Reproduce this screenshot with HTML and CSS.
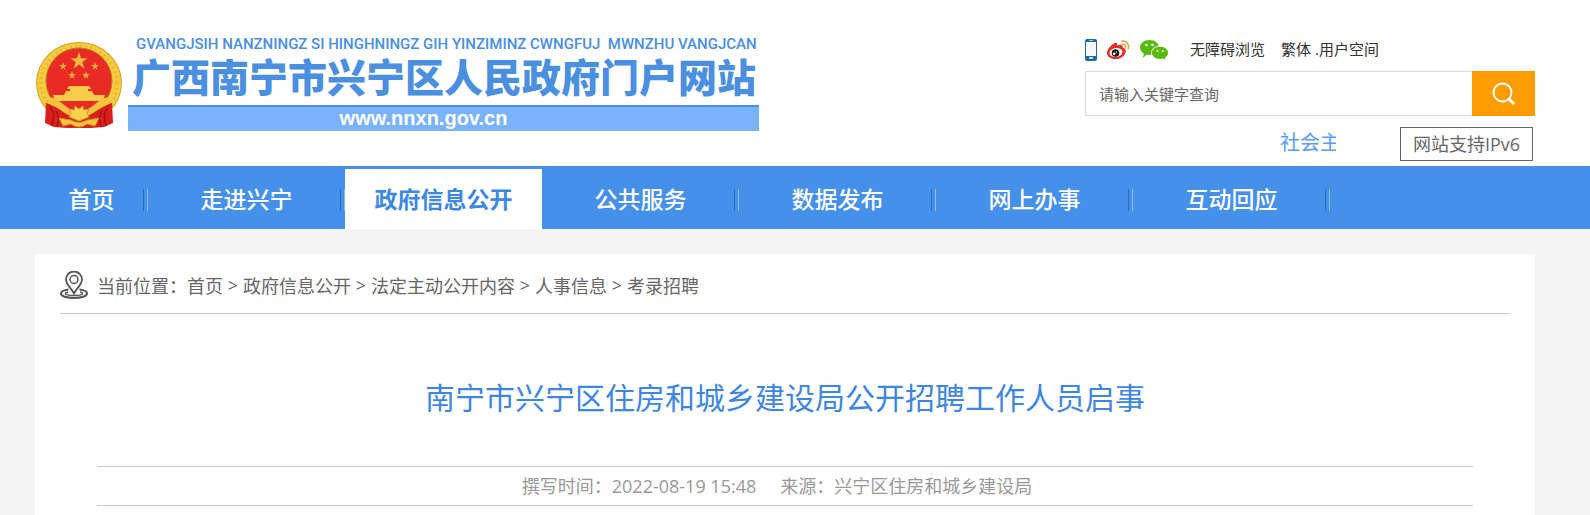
FILE: index.html
```html
<!DOCTYPE html>
<html lang="zh-CN">
<head>
    <meta charset="UTF-8">
    <meta name="viewport" content="width=device-width, initial-scale=1.0">
    <title>南宁市兴宁区住房和城乡建设局公开招聘工作人员启事</title>
    <link rel="stylesheet" href="styles.css">
</head>
<body>

    <!-- 页头 -->
    <header class="header">
        <div class="logo">
            <svg class="emblem" viewBox="0 0 88 88" aria-hidden="true">
                <ellipse cx="44" cy="42" rx="43" ry="41" fill="#d9a01c"/>
                <ellipse cx="44" cy="42" rx="42" ry="40" fill="#f6cc42"/>
                <ellipse cx="44" cy="42" rx="38" ry="36" fill="none" stroke="#ebb930" stroke-width="4" stroke-dasharray="2 3"/>
                <circle cx="44" cy="40" r="33" fill="#ea2a25" stroke="#b87a1c" stroke-width="1"/>
                <path d="M44 11l2 6.200h6.500l-5.200 3.900 2 6.300-5.300-3.900-5.300 3.900 2-6.300-5.200-3.900h6.500z" fill="#f0bd42"/>
                <path id="star" d="M28 21l1 3h3l-2.500 2 1 3-2.500-2-2.500 2 1-3-2.500-2h3z" fill="#e9a83c"/>
                <use href="#star" x="32"/>
                <use href="#star" x="9" y="9"/>
                <use href="#star" x="23" y="9"/>
                <path d="M34 45h20l2 3H32zM35 48h18v3H35zM31 50h26l2 4H29zM32 54h24v3H32z" fill="#f8cc48"/>
                <path d="M18 54h52l-2 6H20z" fill="#f8cc48"/>
                <path d="M11 62c8 2 15 8 22 10h22c8-2 14-8 22-10l1 20-9 4-13 1H32l-13-1-9-4z" fill="#d9201c"/>
                <path d="M15 66l4 7-2 12M21 70l3 7-2 9M73 66l-4 7 2 12M67 70l-3 7 2 9" fill="none" stroke="#a81212" stroke-width="1.500"/>
                <path d="M15 59c9 2 14 12 24 14M73 59c-9 2-14 12-24 14" fill="none" stroke="#f3c13b" stroke-width="6"/>
                <path d="M36 72l-2-4 5 1 1-4 4 3 4-3 1 4 5-1-2 4 2 4-5 2-5 2-5-2-5-2z" fill="#f8d04c" stroke="#cf9420" stroke-width="1"/>
                <path d="M24 77l12 2c5 3 11 3 16 0l12-2-4 8-8-2c-5 4-11 4-16 0l-8 2z" fill="#f4c43f" stroke="#c98a1c" stroke-width="1"/>
            </svg>
            <div class="logo-text">
                <div class="logo-pinyin">GVANGJSIH NANZNINGZ SI HINGHNINGZ GIH YINZIMINZ CWNGFUJ &nbsp;MWNZHU VANGJCAN</div>
                <div class="logo-name">广西南宁市兴宁区人民政府门户网站</div>
                <div class="logo-url">www.nnxn.gov.cn</div>
            </div>
        </div>

        <div class="tools">
            <div class="tool-links">
                <a href="#" class="icon" aria-label="手机版">
                    <svg width="12" height="22" viewBox="0 0 12 22">
                        <rect width="12" height="22" rx="2" fill="#2168a8"/>
                        <rect x="1" y="3" width="10" height="14" fill="#f6fafd"/>
                        <path d="M4 1.500h4" stroke="#9cc2e0"/>
                        <rect x="4" y="18" width="4" height="2" rx="1" fill="#d5e6f3"/>
                    </svg>
                </a>
                <a href="#" class="icon" aria-label="微博">
                    <svg width="23" height="20" viewBox="0 0 23 20">
                        <path d="M8 3c2-.8 2.500.8 2 2.500 3-1.500 6.500-1 5.500 2 3 .8 4 2.500 3 5.200-1.500 4-5.500 6.300-10 6.300-5 0-8.500-2.500-8.500-6C0 9 5 4 8 3z" fill="#e0302b"/>
                        <ellipse cx="9" cy="12.500" rx="6.500" ry="4.500" fill="#fff" transform="rotate(-8 9 12.500)"/>
                        <circle cx="8.500" cy="13" r="3.800" fill="#201514"/>
                        <circle cx="7.200" cy="13.800" r="1.300" fill="#fff"/>
                        <circle cx="9.500" cy="12" r=".7" fill="#fff"/>
                        <path d="M14.500 1.200c4.500-.9 8 2.600 6.800 7.200M15 4.200c2.600-.4 4 1.200 3.400 3.600" fill="none" stroke="#f0a045" stroke-width="1.500" stroke-linecap="round"/>
                    </svg>
                </a>
                <a href="#" class="icon icon-wechat" aria-label="微信">
                    <svg width="29" height="21" viewBox="0 0 29 21">
                        <path d="M9.500 0C15 0 19 3.300 19 7.500S15 15 9.500 15c-1 0-2-.1-3-.4L3 18l.8-4.500C1.500 12 0 10 0 7.500 0 3.300 4 0 9.500 0z" fill="#57bb0c"/>
                        <path d="M20 6.200c4.700 0 8.500 2.900 8.500 6.600 0 2-1.200 3.800-3 5l.6 2.700-3-1.500c-1 .3-2 .4-3.100.4-4.700 0-8.500-2.900-8.500-6.600s3.800-6.600 8.500-6.600z" fill="#57bb0c" stroke="#fff"/>
                        <circle cx="6.500" cy="5" r="1.300" fill="#fff"/>
                        <circle cx="12.500" cy="5" r="1.300" fill="#fff"/>
                        <circle cx="17.500" cy="11" r="1.100" fill="#fff"/>
                        <circle cx="22.800" cy="11" r="1.100" fill="#fff"/>
                    </svg>
                </a>
                <a href="#" class="link-access">无障碍浏览</a>
                <span class="link-user"><a href="#">繁体</a> .<a href="#">用户空间</a></span>
            </div>
            <form class="search">
                <input type="text" placeholder="请输入关键字查询" aria-label="关键字">
                <button type="button" aria-label="搜索">
                    <svg width="24" height="24" viewBox="0 0 24 24" fill="none" stroke="#fff" stroke-width="2">
                        <circle cx="10.500" cy="10.500" r="9"/>
                        <path d="M16.500 16.500l5.500 5.500" stroke-width="3"/>
                    </svg>
                </button>
            </form>
            <div class="notice">
                <div class="scroll-text">社会主</div>
                <a href="#" class="ipv6">网站支持IPv6</a>
            </div>
        </div>
    </header>

    <!-- 导航栏 -->
    <nav class="nav">
        <div class="nav-inner">
            <a href="#" class="nav-home">首页</a>
            <a href="#">走进兴宁</a>
            <a href="#" class="active">政府信息公开</a>
            <a href="#">公共服务</a>
            <a href="#">数据发布</a>
            <a href="#">网上办事</a>
            <a href="#">互动回应</a>
        </div>
    </nav>

    <!-- 正文 -->
    <main class="content">
        <div class="breadcrumb">
            <svg width="28" height="28" viewBox="0 0 28 28" fill="none" stroke="#555">
                <path d="M8.500 18.500C4 19 1 20.500 1 22.500 1 25.300 7 27 14 27s13-1.700 13-4.500c0-2-3-3.500-7.500-4" stroke-width="2"/>
                <path d="M8 21c-2 .4-2.500 1-2.500 1.500 0 1.200 4 2 8.500 2s8.500-.8 8.500-2c0-.5-.5-1.100-2.500-1.500" stroke-width="1.500"/>
                <path d="M14 22.500C11.500 17.500 6 13.500 6 8.500a8 8 0 0 1 16 0c0 5-5.500 9-8 14z" fill="#fff" stroke-width="1.800"/>
                <circle cx="14" cy="8.500" r="4" stroke-width="1.500"/>
            </svg>
            <span>当前位置：</span>
            <a href="#">首页</a>
            <i>&gt;</i>
            <a href="#">政府信息公开</a>
            <i>&gt;</i>
            <a href="#">法定主动公开内容</a>
            <i>&gt;</i>
            <a href="#">人事信息</a>
            <i>&gt;</i>
            <a href="#">考录招聘</a>
        </div>
        <h1 class="title">南宁市兴宁区住房和城乡建设局公开招聘工作人员启事</h1>
        <div class="meta">
            <span>撰写时间：2022-08-19 15:48</span>
            <span>来源：兴宁区住房和城乡建设局</span>
        </div>
    </main>

</body>
</html>
```
FILE: styles.css
```css
* {
    box-sizing: border-box;
}
body {
    margin: 0;
    background-color: #f4f4f4;
    font-family: "Open Sans", "Noto Sans CJK SC", sans-serif;
    color: #666;
}
a {
    color: inherit;
    text-decoration: none;
}
svg {
    display: block;
}

/* 页头 */
.header {
    display: flex;
    justify-content: space-between;
    align-items: flex-start;
    height: 166px;
    padding: 0 55px 0 35px;
    background-color: #fff;
}
.logo {
    display: flex;
    align-items: flex-start;
    gap: 5px;
    padding-top: 34px;
}
.emblem {
    width: 88px;
    height: 88px;
    margin-top: 7px;
}
.logo-text {
    width: 631px;
    color: #4b8fe0;
    white-space: nowrap;
}
.logo-pinyin {
    padding-left: 8px;
    font-family: Roboto, sans-serif;
    font-size: 15px;
    font-weight: 500;
    line-height: 20px;
}
.logo-name {
    padding-left: 4px;
    font-size: 39px;
    font-weight: 900;
    line-height: 46px;
}
.logo-url {
    height: 26px;
    margin-top: 5px;
    padding-right: 40px;
    border-top: 2px solid #4b8fe0;
    background-color: #7ab3fb;
    color: #fff;
    font-family: "Liberation Sans", sans-serif;
    font-size: 20px;
    font-weight: bold;
    line-height: 22px;
    text-align: center;
}

.tools {
    width: 450px;
    padding-top: 38px;
}
.tool-links {
    display: flex;
    align-items: center;
    height: 24px;
    color: #333;
    font-size: 15px;
}
.icon {
    margin-right: 10px;
}
.icon-wechat {
    margin-right: 21px;
}
.link-access,
.link-user {
    padding-bottom: 3px;
}
.link-access {
    margin-right: 16px;
}
.search {
    display: flex;
    height: 45px;
    margin-top: 9px;
}
.search input {
    flex: 1;
    min-width: 0;
    padding: 0 13px;
    border: 1px solid #dcdcdc;
    border-right: none;
    outline: none;
    font-family: inherit;
    font-size: 15px;
}
.search input::placeholder {
    color: #666;
}
.search button {
    display: flex;
    align-items: center;
    justify-content: center;
    width: 63px;
    border: none;
    background-color: #ff9c00;
}
.notice {
    display: flex;
    justify-content: flex-end;
    margin-top: 11px;
    padding-right: 2px;
    line-height: 32px;
}
.scroll-text {
    width: 56px;
    margin-right: 64px;
    overflow: hidden;
    color: #5b9cf8;
    font-size: 20px;
    white-space: nowrap;
}
.ipv6 {
    width: 133px;
    border: 1px solid #666;
    font-size: 18px;
    text-align: center;
}

/* 导航栏 */
.nav {
    height: 63px;
    padding: 3px 35px 0;
    background-color: #4590e8;
}
.nav-inner {
    display: flex;
}
.nav a {
    position: relative;
    width: 197px;
    color: #fff;
    font-size: 23px;
    font-weight: 500;
    line-height: 60px;
    text-align: center;
}
.nav .nav-home {
    width: 113px;
}
.nav a::after {
    content: "";
    position: absolute;
    top: 20px;
    right: 0;
    width: 3px;
    height: 22px;
    border-left: 1px solid #2a6cc2;
    border-right: 1px solid #8cbcf4;
}
.nav .active {
    background-color: #fff;
    color: #3e88e2;
    font-weight: bold;
}
.nav .active::after {
    display: none;
}

/* 正文 */
.content {
    min-height: 261px;
    margin: 25px 55px 0 35px;
    padding: 0 25px;
    background-color: #fff;
}
.breadcrumb {
    display: flex;
    align-items: center;
    height: 60px;
    padding-top: 3px;
    border-bottom: 1px solid #ccc;
    font-size: 18px;
}
.breadcrumb svg {
    margin-right: 9px;
}
.breadcrumb i {
    width: 20px;
    font-style: normal;
    text-align: center;
}
.title {
    margin: 60px 0 45px;
    color: #3e86e2;
    font-size: 30px;
    font-weight: normal;
    line-height: 47px;
    text-align: center;
}
.meta {
    display: flex;
    justify-content: center;
    gap: 24px;
    margin: 0 37px;
    padding-right: 16px;
    border-top: 1px solid #ccc;
    border-bottom: 1px solid #ccc;
    color: #999;
    font-size: 18px;
    line-height: 38px;
}
```
